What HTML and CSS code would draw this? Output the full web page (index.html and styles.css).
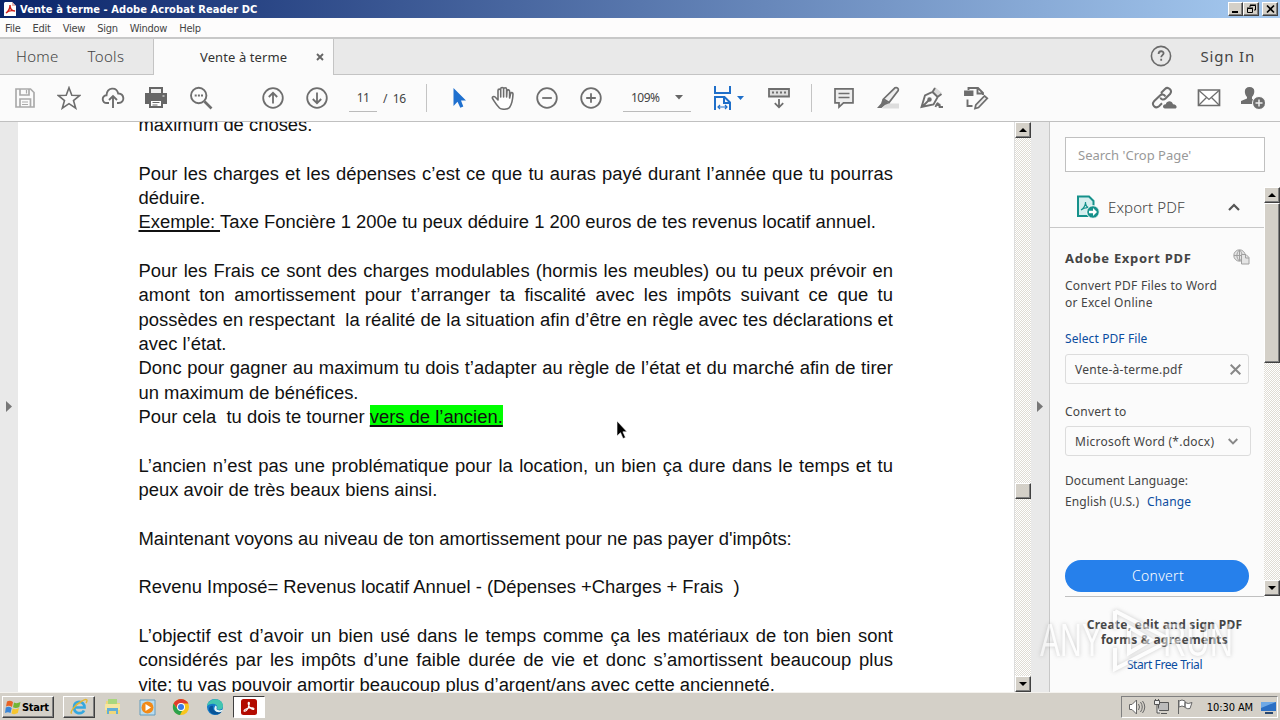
FILE: index.html
```html
<!DOCTYPE html>
<html lang="fr">
<head>
    <meta charset="UTF-8">
    <meta name="viewport" content="width=device-width, initial-scale=1.0">
    <title>Vente à terme - Adobe Acrobat Reader DC</title>
    <link rel="stylesheet" href="styles.css">
</head>
<body>
    <div class="titlebar">
        <svg class="app-icon" width="12" height="14" viewBox="0 0 12 14"><path d="M1 0h7l4 4v10H0V1z" fill="#fff"/><path d="M8 0v4h4z" fill="#e7b4b0"/><path d="M2 11c3-2 4-5 4-8 0 4 2 6 5 6-4-1-7 0-9 2z" fill="none" stroke="#d0201a" stroke-width="1.4"/></svg>
        <span class="title">Vente à terme - Adobe Acrobat Reader DC</span>
        <div class="window-buttons">
            <button class="win-btn"><svg width="11" height="10"><path d="M2 8h6" stroke="#000" stroke-width="2"/></svg></button>
            <button class="win-btn"><svg width="11" height="10"><path d="M4 3V1.500h5.500V6H8M4 1h6M1.500 4.500h5v4h-5zM1 4h6" fill="none" stroke="#000"/></svg></button>
            <button class="win-btn close"><svg width="11" height="10"><path d="M2 1.500l7 7M9 1.500l-7 7" stroke="#000" stroke-width="1.700"/></svg></button>
        </div>
    </div>

    <div class="menubar">
        <span>File</span><span>Edit</span><span>View</span><span>Sign</span><span>Window</span><span>Help</span>
    </div>

    <div class="tabs">
        <div class="tab-main"><span class="home">Home</span><span class="tools">Tools</span></div>
        <div class="tab-active"><span>Vente à terme</span><svg width="8" height="8"><path d="M1 1l6 6M7 1l-6 6" stroke="#666" stroke-width="1.900"/></svg></div>
        <div class="tab-rest">
            <svg width="22" height="22" viewBox="0 0 22 22" fill="none" stroke="#6a6a6a"><circle cx="11" cy="11" r="9.600" stroke-width="1.600"/><path d="M8.600 9c0-3.600 5-3.500 5-.8 0 1.800-2.400 2-2.400 4M11.200 13.800v2" stroke-width="1.800"/></svg>
            <span class="signin">Sign In</span>
        </div>
    </div>

    <div class="toolbar">
        <div class="tool"><svg width="24" height="24" viewBox="0 0 24 24" fill="none" stroke="#ababab" stroke-width="1.700"><path d="M3 3h14.500L21 6.500V21H3zM7 3v6h9V3M7 21v-8h10.500v8"/><path d="M13.500 4v3.500M9 16h6M9 18.500h6" stroke-width="1.200"/></svg></div>
        <div class="tool"><svg width="24" height="24" viewBox="0 0 24 24" fill="none" stroke="#6e6e6e" stroke-width="1.600"><path d="M12 1.700l2.800 7.500 8 .3-6.300 5 2.200 7.700L12 17.700l-6.700 4.500 2.200-7.700-6.300-5 8-.3z"/></svg></div>
        <div class="tool"><svg width="24" height="24" viewBox="0 0 24 24" fill="none" stroke="#6e6e6e" stroke-width="1.900"><path d="M8 17H6C.5 17 .3 9.500 5.500 9.300 6 1 15.500.5 17.200 7.500c6.300-.5 7.300 9.500.3 9.500H16M12 22V10.500M8 14l4-4 4 4"/></svg></div>
        <div class="tool print"><svg width="24" height="24" viewBox="0 0 24 24"><path d="M5 1h14v6H5z" fill="#666"/><path d="M7 3h10v4H7z" fill="#eee"/><path d="M1 7h22v11h-4v-4H5v4H1z" fill="#666"/><path d="M6 14h12v7H6z" fill="#fff" stroke="#666" stroke-width="2"/><path d="M8.500 16.500h7M8.500 19h5" stroke="#666"/><path d="M18.500 10h2" stroke="#fff"/></svg></div>
        <div class="tool"><svg width="24" height="24" viewBox="0 0 24 24" fill="none" stroke="#6e6e6e" stroke-width="1.900"><circle cx="9.700" cy="9.500" r="7.700"/><path d="M15.500 15.500l7 7" stroke-width="2.600"/><path d="M5.700 9.500h2M8.900 9.500h2M12 9.500h2"/></svg></div>
        <div class="tool up"><svg width="24" height="24" viewBox="0 0 24 24" fill="none" stroke="#6e6e6e" stroke-width="1.800"><circle cx="12" cy="12" r="9.800"/><path d="M12 17.500V7M7.800 11L12 6.800l4.200 4.200"/></svg></div>
        <div class="tool"><svg width="24" height="24" viewBox="0 0 24 24" fill="none" stroke="#6e6e6e" stroke-width="1.800"><circle cx="12" cy="12" r="9.800"/><path d="M12 6.500V17M7.800 13l4.200 4.200 4.200-4.200"/></svg></div>
        <span class="page-no">11</span><span class="page-total">/&nbsp; 16</span>
        <i class="sep sep-first"></i>
        <div class="tool"><svg width="24" height="24" viewBox="0 0 24 24"><path d="M6.500 2v18l4-4.300 2.800 6 3-1.300-2.300-5.900h5z" fill="#1f70cf"/></svg></div>
        <div class="tool"><svg width="24" height="24" viewBox="0 0 24 24" fill="#fff" stroke="#6e6e6e" stroke-width="1.600" stroke-linejoin="round"><path d="M8.500 22C5 18.500 3.500 15.500 1.500 12.500c-.7-1.600 1.300-2.700 2.600-1.500L7 14V4.500c0-1.800 2.700-1.800 2.700 0v6.500V3c0-2 2.900-2 2.900 0v8V3.300c0-2 3-2 3 0V11l.4-6c.2-1.700 2.600-1.500 2.600.3V12l1-4.500c.4-1.500 2.400-1 2.400.5-.2 5-1 10-3.500 13.500-2 2.200-8 2.200-10 .5z"/></svg></div>
        <div class="tool"><svg width="24" height="24" viewBox="0 0 24 24" fill="none" stroke="#6e6e6e" stroke-width="1.800"><circle cx="12" cy="12" r="9.800"/><path d="M7.200 12h9.600"/></svg></div>
        <div class="tool"><svg width="24" height="24" viewBox="0 0 24 24" fill="none" stroke="#6e6e6e" stroke-width="1.800"><circle cx="12" cy="12" r="9.800"/><path d="M7.200 12h9.600M12 7.200v9.600"/></svg></div>
        <div class="zoom"><span>109%</span><svg width="8" height="5"><path d="M0 0h8L4 4.500z" fill="#666"/></svg></div>
        <div class="fit"><svg width="32" height="26" viewBox="0 0 32 26" fill="none" stroke="#1f6fc9" stroke-width="2"><path d="M3 1v7h15V1M3 25V12h9.500l5.500 5.500V25M12 12.500V18h6"/><path d="M6 22h9M8 20l-2 2 2 2M13 20l2 2-2 2" stroke-width="1.200"/><path d="M25 11h7l-3.500 4z" fill="#1f6fc9" stroke="none"/></svg></div>
        <div class="tool"><svg width="24" height="24" viewBox="0 0 24 24" fill="none" stroke="#6e6e6e" stroke-width="1.800"><path d="M2 3h20v7.500H2z" fill="#ddd"/><path d="M5 6.500h2M9 6.500h2M13 6.500h2M17 6.500h2M12 13v8M7.800 17.200L12 21.300l4.200-4.100"/></svg></div>
        <i class="sep sep-second"></i>
        <div class="tool"><svg width="24" height="24" viewBox="0 0 24 24" fill="#eee" stroke="#6e6e6e" stroke-width="1.700"><path d="M3 2.800h18v14h-9.500L7 21v-4.200H3z"/><path d="M6.500 7.500h11M6.500 11.500h11" stroke-width="1.300"/></svg></div>
        <div class="tool"><svg width="24" height="24" viewBox="0 0 24 24"><path d="M11 17.500h12v5H6z" fill="#ddd"/><path d="M19 1.800c2-.8 4 .8 3.200 2.800L13 16.500l-5.500-3.500z" fill="#eee" stroke="#6e6e6e" stroke-width="1.700"/><path d="M6.500 13l6.500 4.200-4 1.800-3.500 3H1l4-4.500z" fill="#6e6e6e"/></svg></div>
        <div class="tool"><svg width="24" height="24" viewBox="0 0 24 24" fill="none" stroke="#6e6e6e" stroke-width="1.900"><path d="M15 1l7 6-4 3-5-4z" fill="#ddd" stroke="none"/><path d="M1.500 21l3.500-11.500 7.500-3.500 5.200 5L13.500 18.500zM2.500 20.500l6-6M12.500 6l2.500-4M17.500 11l4-3M15.500 21c2-5.500 3-4.500 2.500-1 1.500-3 2-1.500 1.700 1H23"/><circle cx="9.500" cy="13.500" r="1.300" fill="#6e6e6e"/></svg></div>
        <div class="tool"><svg width="26" height="24" viewBox="0 0 26 24" fill="none" stroke="#6e6e6e" stroke-width="1.900"><path d="M5.500 4V2h9.500l5 5v2M14.500 2v5.500H20M4.500 13.500V20h5"/><path d="M2 5.500h7.500v3.500H2z" fill="#6e6e6e"/><path d="M21.500 10l2.800 2.300-8.800 9.200-3.500 1 .8-3.500z" fill="#eee" stroke-width="1.700"/></svg></div>
        <div class="tool share"><svg width="26" height="24" viewBox="0 0 26 24" fill="none" stroke="#6e6e6e" stroke-width="2"><path d="M10 7l4-4c3-3 8 1.500 5 5l-4.500 4.500c-2 2-4.500 1-5.200-1M14.500 10.500c-1.500-2.800-4-2.500-5.500-1L3 15.300c-3 3.500 1.500 8 5 5l3-3"/><path d="M14 22.500c-3 0-2.500-4.500.8-4.300 1.200-4 6.400-3.700 7.200 0 4-.2 4.700 4.300 2 4.300z" fill="#6e6e6e" stroke="none"/></svg></div>
        <div class="tool mail"><svg width="24" height="24" viewBox="0 0 24 24" fill="#fff" stroke="#6e6e6e" stroke-width="1.700"><path d="M1.500 4h21v15.500h-21z"/><path d="M2 4.500l10 9 10-9M2 19l7.500-7.500M22 19l-7.500-7.500" fill="none" stroke-width="1.300"/></svg></div>
        <div class="tool"><svg width="24" height="24" viewBox="0 0 24 24" fill="#6e6e6e"><path d="M8.500 1c6.500 0 5.500 7 2.500 10v2l3 1.500v3.500H0v-3l6-2.500V11C3 8 2.500 1 8.500 1z"/><circle cx="18" cy="17" r="6.500" stroke="#fbfbfb"/><path d="M18 13.500v7M14.500 17h7" stroke="#eee" stroke-width="1.500"/></svg></div>
    </div>

    <div class="workspace">
        <div class="left-strip"><svg width="6" height="11"><path d="M0 0v11l6-5.500z" fill="#777"/></svg></div>
        <main class="document">
            <div class="page">
                <p>maximum de choses.</p>
                <p></p>
                <p class="full">Pour les charges et les dépenses c’est ce que tu auras payé durant l’année que tu pourras</p>
                <p>déduire.</p>
                <p><u>Exemple: </u>Taxe Foncière 1 200e tu peux déduire 1 200 euros de tes revenus locatif annuel.</p>
                <p></p>
                <p class="full">Pour les Frais ce sont des charges modulables (hormis les meubles) ou tu peux prévoir en</p>
                <p class="full">amont ton amortissement pour t’arranger ta fiscalité avec les impôts suivant ce que tu</p>
                <p class="full">possèdes en respectant&nbsp; la réalité de la situation afin d’être en règle avec tes déclarations et</p>
                <p>avec l’état.</p>
                <p class="full">Donc pour gagner au maximum tu dois t’adapter au règle de l’état et du marché afin de tirer</p>
                <p>un maximum de bénéfices.</p>
                <p>Pour cela&nbsp; tu dois te tourner <mark>vers de l’ancien.</mark></p>
                <p></p>
                <p class="full">L’ancien n’est pas une problématique pour la location, un bien ça dure dans le temps et tu</p>
                <p>peux avoir de très beaux biens ainsi.</p>
                <p></p>
                <p>Maintenant voyons au niveau de ton amortissement pour ne pas payer d'impôts:</p>
                <p></p>
                <p>Revenu Imposé= Revenus locatif Annuel - (Dépenses +Charges + Frais&nbsp; )</p>
                <p></p>
                <p class="full">L’objectif est d’avoir un bien usé dans le temps comme ça les matériaux de ton bien sont</p>
                <p class="full">considérés par les impôts d’une faible durée de vie et donc s’amortissent beaucoup plus</p>
                <p>vite; tu vas pouvoir amortir beaucoup plus d’argent/ans avec cette ancienneté.</p>
            </div>
        </main>
        <div class="scrollbar">
            <button class="scroll-btn"><svg width="8" height="4"><path d="M0 4h8L4 0z"/></svg></button>
            <div class="thumb"></div>
            <button class="scroll-btn"><svg width="8" height="4"><path d="M0 0h8L4 4z"/></svg></button>
        </div>
        <div class="right-strip"><svg width="6" height="11"><path d="M0 0v11l6-5.500z" fill="#777"/></svg></div>

        <aside class="panel">
            <div class="search">Search 'Crop Page'</div>
            <div class="panel-main">
                <div class="panel-content">
                    <div class="export-head">
                        <svg width="24" height="24" viewBox="0 0 24 24"><path d="M2 1.500h11l4.500 4.500v15H2z" fill="#d5eeee" stroke="#16918b" stroke-width="2"/><path d="M5 15c3-2 4.500-5 4.500-8 0 4 2 6 5 6-4-1-7 0-9.500 2z" fill="none" stroke="#16918b" stroke-width="1.100"/><circle cx="17" cy="17" r="6.300" fill="#16918b" stroke="#fff"/><path d="M13 15.800h4V13l4 4-4 4v-2.800h-4z" fill="#fff"/></svg>
                        <span>Export PDF</span>
                        <svg width="12" height="8"><path d="M1 7l5-5 5 5" fill="none" stroke="#555" stroke-width="2.200"/></svg>
                    </div>
                    <div class="export-body">
                        <div class="export-title"><span>Adobe Export PDF</span><svg width="17" height="16" viewBox="0 0 17 16" fill="#e5e5e5" stroke="#a0a0a0"><circle cx="6.500" cy="6.500" r="5.700"/><path d="M1 6.500h11M6.500 1v11M6.500 1C3 4 3 9 6.500 12M6.500 1C10 4 10 9 6.500 12" fill="none"/><path d="M8.500 5.500H13l3 3v6.500H8.500z"/><path d="M12.500 5.500V9H16" fill="none"/></svg></div>
                        <p class="desc">Convert PDF Files to Word<br>or Excel Online</p>
                        <a class="select-link">Select PDF File</a>
                        <div class="field file"><span>Vente-à-terme.pdf</span><svg width="11" height="11"><path d="M.7.7l9.600 9.600M10.300.7L.7 10.300" stroke="#888" stroke-width="2"/></svg></div>
                        <div class="convert-label">Convert to</div>
                        <div class="field format"><span>Microsoft Word (*.docx)</span><svg width="10" height="7"><path d="M.7 1L5 5.300 9.300 1" fill="none" stroke="#888" stroke-width="1.900"/></svg></div>
                        <div class="language">Document Language:<br><span class="lang-value">English (U.S.)</span><a>Change</a></div>
                        <button class="convert">Convert</button>
                    </div>
                </div>
                <div class="panel-scroll">
                    <button class="scroll-btn"><svg width="8" height="4"><path d="M0 4h8L4 0z"/></svg></button>
                    <div class="panel-thumb"></div>
                    <button class="scroll-btn"><svg width="8" height="4"><path d="M0 0h8L4 4z"/></svg></button>
                </div>
            </div>
            <div class="promo">
                <strong>Create, edit and sign PDF<br>forms &amp; agreements</strong>
                <a>Start Free Trial</a>
            </div>
        </aside>
    </div>

    <footer class="taskbar">
        <button class="start"><svg width="16" height="15" viewBox="0 0 16 15"><path d="M2 1.500Q5 0 8 2L7 7Q4 5 1 6.500z" fill="#e86325"/><path d="M9 2.500q3 1.500 6.500-.5l-1.200 5Q11 9 8 7.300z" fill="#72b533"/><path d="M.8 7.500Q4 6 6.700 8l-1.200 5Q3 11.500 0 13z" fill="#3a86d8"/><path d="M7.700 8.500Q11 10 14 8l-1.200 5Q9.500 15 6.500 13.500z" fill="#f6c52f"/></svg><span>Start</span></button>
        <div class="task ie"><svg width="18" height="18" viewBox="0 0 18 18" fill="none"><path d="M14 12.500c-2 4-10 4-10-3.500C4 2 14.500 2 14.500 9.500H5" stroke="#36a8df" stroke-width="2.700"/><path d="M2 15C-1 16 4 7 12 3c5-3 6-1 4 2" stroke="#e3b632" stroke-width="1.400"/></svg></div>
        <div class="task"><svg width="18" height="18" viewBox="0 0 18 18"><path d="M2 3h6l1 2h7v11H2z" fill="#efd77c"/><path d="M4 1h9v5H4z" fill="#a9d77d"/><path d="M1 6h15v6H1z" fill="#f6e6a0"/><path d="M3 16v-6h11v6h-2v-3H5v3z" fill="#63aed7"/></svg></div>
        <div class="task"><svg width="17" height="17" viewBox="0 0 17 17"><path d="M1 1h15v15H1z" fill="#b9dcef" stroke="#659cbd"/><circle cx="8.500" cy="8.500" r="6" fill="#f28a18"/><path d="M6.500 5v7l5.500-3.500z" fill="#fff"/></svg></div>
        <div class="task"><svg width="18" height="18" viewBox="0 0 18 18"><circle cx="9" cy="9" r="8" fill="#f8c51c"/><path d="M1.500 5.500C5-.5 13-.5 16.500 5.500H9L6 11z" fill="#df3a2d"/><path d="M1.500 5.500L5.500 11l5 1L8 17C2 16-.5 10.500 1.500 5.500z" fill="#2ba24c"/><circle cx="9" cy="9" r="4" fill="#fff"/><circle cx="9" cy="9" r="3" fill="#397be5"/></svg></div>
        <div class="task"><svg width="18" height="18" viewBox="0 0 18 18"><circle cx="9" cy="9" r="8" fill="#147bc8"/><path d="M1 8C2-1 17-1 17 8c0 4-5 4.500-6 3 2-5-5-7-10-3z" fill="#42c5b0"/><path d="M7 8c-1 5 4 7 9 5-3 6-13 4-13-2 0-2 2-4 4-3z" fill="#075499"/><path d="M9.500 7.500c2 1 1 2.500 1 3.500 1.500 2 5 1.500 6.500.5l-1 2c-5 2-10-1-6.500-6z" fill="#e8f6f6"/></svg></div>
        <div class="task acrobat"><svg width="16" height="16" viewBox="0 0 16 16"><rect width="16" height="16" rx="2.500" fill="#b30b00"/><path d="M3 12c0-1.500 3-2.500 5-3 2-.4 5-.3 5 .8 0 1.500-2.500.3-4-1.300C7.500 7 6.500 3.300 7.800 3.300S8 6.500 7 9c-1 2-2.500 4-4 3z" fill="none" stroke="#fff" stroke-width="1.100"/></svg></div>
        <div class="tray">
            <svg width="18" height="16" viewBox="0 0 18 16" fill="none" stroke="#666"><path d="M1.500 5.500H4L8.500 1v14L4 10.500H1.500z" fill="#fff"/><path d="M10.500 5q2 3 0 6M12.500 3q3.500 5 0 10M14.500 2q4.500 6 0 12"/></svg>
            <svg width="17" height="16" viewBox="0 0 17 16" fill="#eee" stroke="#555"><path d="M5.500 3.500h10v8h-10z" fill="#bbb"/><path d="M8 14.500h6M1.500 1.500h5v4h-5zM2.500 0v2M5.500 0v2M4 5.500V14h3"/></svg>
            <svg width="17" height="16" viewBox="0 0 17 16" fill="#fff" stroke="#666"><path d="M1.500 1v14M2 2q3-2 6 0v6q-3-2-6 0zM8 3.500q3 2 7 0l-2 6q-2 1-5-1z"/></svg>
            <span class="clock">10:30 AM</span>
            <svg width="15" height="13" viewBox="0 0 15 13"><path d="M0 1h15v9H0z" fill="#2b6fc4"/><path d="M0 1h15L0 7z" fill="#6fa9e6"/><path d="M4 11h8v2H4z" fill="#27466f"/></svg>
        </div>
    </footer>

    <svg class="cursor" width="12" height="20" viewBox="0 0 12 20"><path d="M1 1v15l3.500-3.300L7 18.500l2.500-1-2.600-5.700H11z" stroke="#fff" stroke-width=".6"/></svg>
    <svg class="watermark" width="200" height="72" viewBox="0 0 200 72">
        <text x="3" y="52" textLength="62" lengthAdjust="spacingAndGlyphs">ANY</text>
        <path d="M78 7v18M78 44v21l56-29L78 7M92 23l22 13-22 13z"/>
        <text x="126" y="52" textLength="70" lengthAdjust="spacingAndGlyphs">RUN</text>
    </svg>
</body>
</html>
```
FILE: styles.css
```css
* {
    box-sizing: border-box;
}

body {
    position: relative;
    margin: 0;
    width: 1280px;
    height: 720px;
    overflow: hidden;
    display: flex;
    flex-direction: column;
    background: #fbfbfb;
    font-family: "Noto Sans", sans-serif;
    color: #444;
    white-space: nowrap;
}

svg {
    display: block;
    flex-shrink: 0;
}

button {
    padding: 0;
    font-family: inherit;
}

p {
    margin: 0;
}

.titlebar {
    height: 18px;
    flex-shrink: 0;
    display: flex;
    align-items: center;
    padding: 0 2px 0 4px;
    background: linear-gradient(90deg, #0a246a, #a6caf0);
}

.title {
    margin-left: 4px;
    color: #fff;
    font: bold 11px/18px "DejaVu Sans Condensed", "DejaVu Sans", sans-serif;
    font-stretch: condensed;
    letter-spacing: 0.07px;
    padding-top: 1px;
}

.window-buttons {
    margin-left: auto;
    display: flex;
}

.win-btn,
.scroll-btn {
    display: flex;
    align-items: center;
    justify-content: center;
    width: 16px;
    height: 14px;
    background: #d4d0c8;
    border: 1px solid;
    border-color: #fff #404040 #404040 #fff;
    box-shadow: inset -1px -1px #808080;
}

.win-btn:first-child {
    width: 15px;
}

.close {
    margin-left: 3px;
}

.menubar {
    height: 19px;
    flex-shrink: 0;
    display: flex;
    gap: 12px;
    padding-left: 5px;
    background: #fdfcfc;
    font: 11px/21px "DejaVu Sans Condensed", "DejaVu Sans", sans-serif;
    font-stretch: condensed;
    letter-spacing: -0.25px;
}

.tabs {
    height: 38px;
    flex-shrink: 0;
    display: flex;
    border-top: 2px solid #c8c8c8;
}

.tab-main,
.tab-rest {
    display: flex;
    align-items: center;
    background: #e9e9e9;
    border-bottom: 1px solid #c4c4c4;
}

.tab-main {
    width: 154px;
    padding: 0 0 2px 16px;
    gap: 29px;
    border-right: 1px solid #c4c4c4;
    font-size: 15px;
    font-weight: 300;
    letter-spacing: 0.3px;
}

.tab-active {
    width: 179px;
    display: flex;
    align-items: center;
    justify-content: space-between;
    padding: 0 9px 0 46px;
    font-size: 13px;
    letter-spacing: 0.1px;
    color: #333;
}

.tab-rest {
    flex: 1;
    justify-content: flex-end;
    gap: 29px;
    padding: 0 25px 2px 0;
    border-left: 1px solid #c4c4c4;
}

.signin {
    font-size: 15px;
    letter-spacing: 0.8px;
}

.toolbar {
    height: 47px;
    flex-shrink: 0;
    display: flex;
    align-items: center;
    padding: 0 5px 0 3px;
    border-bottom: 1px solid #c0c0c0;
    font-size: 12px;
    color: #444;
}

.tool {
    width: 44px;
    display: flex;
    justify-content: center;
    flex-shrink: 0;
}

.print {
    padding-right: 2px;
}

.up {
    margin-left: 28px;
}

.page-no {
    width: 28px;
    height: 27px;
    margin-left: 10px;
    line-height: 26px;
    text-align: center;
    letter-spacing: -0.5px;
    border-bottom: 1px solid #bbb;
}

.page-total {
    width: 49px;
    padding-left: 6px;
    letter-spacing: -0.3px;
}

.sep {
    width: 1px;
    height: 28px;
    background: #c4c4c4;
}

.sep-first {
    margin-right: 10px;
}

.zoom {
    width: 68px;
    height: 27px;
    margin: 0 21px 0 10px;
    padding: 0 8px;
    display: flex;
    align-items: center;
    justify-content: space-between;
    border-bottom: 1px solid #bbb;
    letter-spacing: -0.5px;
}

.fit {
    width: 45px;
}

.sep-second {
    margin: 0 10px;
}

.share {
    margin-left: auto;
}

.mail {
    margin-left: 1px;
}

.workspace {
    flex: 1;
    min-height: 0;
    display: flex;
}

.left-strip,
.right-strip {
    width: 18px;
    display: flex;
    align-items: center;
    justify-content: center;
    padding-bottom: 1px;
    background: #e9e9e9;
}

.document {
    width: 996px;
    overflow: hidden;
    background: #fff;
    padding-left: 120.5px;
}

.page {
    width: 754.5px;
    margin-top: -9px;
    font-family: "Liberation Sans", Arial, sans-serif;
    font-size: 18.42px;
    line-height: 24.33px;
    color: #111;
}

.page p {
    height: 24.33px;
    white-space: pre;
}

.page .full {
    white-space: normal;
    text-align: justify;
    text-align-last: justify;
    letter-spacing: 0.04px;
}

.page u,
mark {
    text-decoration: underline;
    text-decoration-thickness: 2px;
    text-underline-offset: 2px;
    text-decoration-skip-ink: none;
}

mark {
    padding: 1px 0 0;
    background: #00ff00;
    color: #111;
}

.scrollbar,
.panel-scroll {
    width: 17px;
    display: flex;
    flex-direction: column;
    background: repeating-conic-gradient(#fff 0 25%, #dfdcd4 0 50%) 0 0 / 2px 2px;
}

.scrollbar {
    border-left: 1px solid #ddd;
}

.scroll-btn {
    width: 16px;
    height: 16px;
    flex-shrink: 0;
}

.thumb,
.panel-thumb {
    background: #d4d0c8;
    border: 1px solid;
    border-color: #fff #404040 #404040 #fff;
    box-shadow: inset -1px -1px #808080;
}

.thumb {
    height: 16px;
    margin: 345px 0 auto;
}

.panel {
    flex: 1;
    display: flex;
    flex-direction: column;
    border-left: 1px solid #c8c8c8;
}

.search {
    width: 200px;
    height: 35px;
    flex-shrink: 0;
    margin: 15px 0 15px 15px;
    padding-left: 12px;
    border: 1px solid #c0c0c0;
    background: #fff;
    font-size: 13px;
    line-height: 34px;
    color: #999;
}

.panel-main {
    height: 409px;
    flex-shrink: 0;
    display: flex;
}

.panel-content {
    width: 214px;
}

.export-head {
    height: 41px;
    display: flex;
    align-items: center;
    padding: 0 24px 0 26px;
    border-bottom: 1px solid #c8c8c8;
}

.export-head span {
    margin: 0 auto 0 8px;
    font-size: 15px;
    font-weight: 300;
    letter-spacing: 0.1px;
}

.export-body {
    height: 369px;
    margin-left: 15px;
    padding-right: 14px;
    font-size: 12px;
    letter-spacing: 0.25px;
    border-bottom: 1px solid #c0c0c0;
}

.export-title {
    padding-top: 21px;
    display: flex;
    justify-content: space-between;
    font-size: 13px;
    line-height: 18px;
    font-weight: bold;
    letter-spacing: 0.7px;
}

.desc {
    margin-top: 10px;
    line-height: 17px;
}

a {
    color: #0b4da0;
}

.select-link {
    display: block;
    margin-top: 19px;
    line-height: 17px;
    letter-spacing: 0.1px;
}

.field {
    display: flex;
    align-items: center;
    justify-content: space-between;
    height: 30px;
    padding: 0 7px 0 9px;
    border: 1px solid #dcdcdc;
    border-radius: 3px;
}

.file {
    width: 184px;
    margin-top: 7px;
}

.convert-label {
    margin: 19px 0 6px;
    line-height: 17px;
}

.format {
    width: 186px;
    padding-right: 12px;
}

.language {
    margin-top: 14px;
    line-height: 21px;
    letter-spacing: 0.1px;
}

.lang-value {
    margin-right: 8px;
}

.convert {
    display: block;
    width: 184px;
    height: 32px;
    margin-top: 48px;
    padding: 0 0 2px 2px;
    border: 0;
    border-radius: 16px;
    background: #2680eb;
    color: #fff;
    font-size: 14px;
    font-weight: 300;
    letter-spacing: 0.3px;
}

.panel-scroll {
    width: 16px;
}

.panel-thumb {
    height: 160px;
    margin-bottom: auto;
}

.promo {
    padding: 21px 1px 0 0;
    text-align: center;
    font-size: 12px;
}

.promo strong {
    display: block;
    line-height: 15px;
    letter-spacing: 0.25px;
}

.promo a {
    display: block;
    margin-top: 9px;
    line-height: 17px;
    letter-spacing: -0.4px;
}

.taskbar {
    height: 28px;
    flex-shrink: 0;
    display: flex;
    align-items: center;
    padding: 1px 2px 0;
    background: #d4d0c8;
    border-top: 1px solid #f4f2ee;
}

.start {
    width: 52px;
    height: 22px;
    display: flex;
    align-items: center;
    margin-right: 9px;
    padding-left: 2px;
    gap: 1px;
    background: #d4d0c8;
    border: 1px solid;
    border-color: #fff #404040 #404040 #fff;
    box-shadow: inset -1px -1px #808080;
    color: #000;
    font: bold 11px "DejaVu Sans Condensed", "DejaVu Sans", sans-serif;
    font-stretch: condensed;
    letter-spacing: -0.3px;
}

.task {
    width: 34px;
    height: 22px;
    display: flex;
    align-items: center;
    justify-content: center;
}

.ie {
    width: 32px;
    margin-right: 1px;
    border: 1px solid;
    border-color: #fff #404040 #404040 #fff;
    box-shadow: inset -1px -1px #808080;
}

.acrobat {
    width: 32px;
    margin-left: 1px;
    background: #fff;
    border: 1px solid;
    border-color: #404040 #fff #fff #404040;
}

.tray {
    margin-left: auto;
    width: 157px;
    height: 22px;
    display: flex;
    align-items: center;
    justify-content: space-between;
    padding: 0 1px 0 6px;
    border: 1px solid;
    border-color: #808080 #fff #fff #808080;
}

.clock {
    margin: 0 1px 0 6px;
    color: #000;
    font: 11px "DejaVu Sans Condensed", "DejaVu Sans", sans-serif;
    font-stretch: condensed;
    letter-spacing: -0.1px;
}

.cursor {
    position: absolute;
    left: 616px;
    top: 420px;
}

.watermark {
    position: absolute;
    left: 1037px;
    top: 604px;
    opacity: 0.5;
    filter: drop-shadow(0 0 2px #999);
}

.watermark text {
    fill: #fff;
    font: 46px "Liberation Sans", Arial, sans-serif;
}

.watermark path {
    fill: none;
    stroke: #fff;
    stroke-width: 4;
}
```
